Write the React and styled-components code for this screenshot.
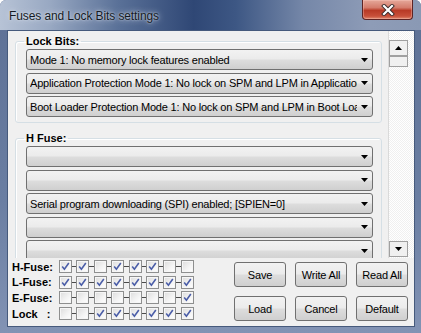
import React from "react"
import styled, { createGlobalStyle } from "styled-components"

const GlobalStyle = createGlobalStyle`
  html, body {
    margin: 0;
    padding: 0;
    background: #ffffff;
  }
  body {
    font-family: "Liberation Sans", Arial, sans-serif;
  }
`

const Window = styled.div`
  width: 421px;
  height: 333px;
  display: flex;
  flex-direction: column;
  border-radius: 6px 6px 0 0;
  overflow: hidden;
  background: linear-gradient(180deg, #5d7095 0%, #6a7ea2 60%, #8293b4 100%);
`

const TitleBar = styled.div`
  height: 30px;
  flex: none;
  display: flex;
  justify-content: space-between;
  align-items: flex-start;
  padding: 0 8px 0 9px;
  box-sizing: border-box;
  background: linear-gradient(90deg, #b7c3d6 0%, #98a8c2 12%, #5a7198 28%, #2f4775 46%, #3d5784 56%, #7587a8 72%, #8e9cb7 88%, #8a99b4 100%);
`

const Title = styled.span`
  padding-top: 9px;
  font-size: 12px;
  line-height: 15px;
  letter-spacing: -0.1px;
  color: #141a24;
  text-shadow: 0 0 6px rgba(230, 236, 245, 0.9), 0 0 2px rgba(230, 236, 245, 0.8);
`

const CloseButton = styled.div`
  width: 51px;
  height: 20px;
  box-sizing: border-box;
  border: 1px solid #5d2424;
  border-top: none;
  border-radius: 0 0 4px 4px;
  background: linear-gradient(180deg, #e5a89a 0%, #d47c6c 40%, #b83a26 55%, #c8503a 85%, #e08a70 100%);
  display: flex;
  align-items: center;
  justify-content: center;
  box-shadow: inset 0 0 0 1px rgba(255, 210, 200, 0.35);
`

const Frame = styled.div`
  flex: 1;
  display: flex;
  padding: 0 6px 6px 7px;
  min-height: 0;
  min-width: 0;
`

const Client = styled.div`
  flex: 1;
  display: flex;
  flex-direction: column;
  background: #f0f0f0;
  border: 1px solid #465a7c;
  min-height: 0;
  min-width: 0;
`

const ScrollArea = styled.div`
  height: 227px;
  flex: none;
  display: flex;
  min-width: 0;
`

const Content = styled.div`
  flex: 1;
  min-width: 0;
  padding: 4px 6px 0 7px;
  border-right: 1px solid #dadada;
  overflow: hidden;
`

const GroupBox = styled.fieldset`
  margin: 0 0 9px 0;
  padding: 2px 8px 5px 10px;
  min-width: 0;
  border: 1px solid #d5dfe5;
  border-radius: 3px;
  box-shadow: inset 1px 1px 0 #ffffff;
  display: flex;
  flex-direction: column;
  gap: 2.5px;
`

const Legend = styled.legend`
  padding: 0 2px;
  margin-left: -2px;
  font-size: 11px;
  font-weight: bold;
  color: #000000;
`

const Combo = styled.div`
  height: 21px;
  min-width: 0;
  box-sizing: border-box;
  border: 1px solid #707070;
  border-radius: 3px;
  background: linear-gradient(180deg, #f2f2f2 0%, #ebebeb 48%, #dddddd 52%, #cfcfcf 100%);
  display: flex;
  align-items: center;
  padding: 0 4px 0 3px;
  font-size: 11px;
  letter-spacing: -0.2px;
  color: #000000;
`

const ComboText = styled.span`
  flex: 1;
  min-width: 0;
  overflow: hidden;
  white-space: nowrap;
`

const Arrow = styled.svg`
  width: 7px;
  height: 4px;
  flex: none;
  margin-left: 4px;
`

const ScrollBar = styled.div`
  width: 25px;
  flex: none;
  display: flex;
  flex-direction: column;
  padding-top: 9px;
  background-color: #f0f0f0;
  background-image: repeating-conic-gradient(#ffffff 0 25%, #f0f0f0 0 50%);
  background-size: 2px 2px;
`

const ScrollButton = styled.div`
  width: 19px;
  height: ${p => p.$h}px;
  box-sizing: border-box;
  border: 1px solid #a0a0a0;
  background: #f0f0f0;
  display: flex;
  align-items: center;
  justify-content: center;
  margin-top: ${p => p.$push ? "auto" : "0"};
  margin-bottom: ${p => p.$push ? "1px" : "0"};
`

const Bottom = styled.div`
  flex: 1;
  display: flex;
  justify-content: space-between;
  padding: 3px 6px 5px 4px;
`

const Bits = styled.div`
  display: flex;
  flex-direction: column;
  gap: 2.7px;
  margin-top: -1px;
`

const BitRow = styled.div`
  display: flex;
  align-items: center;
  height: 13px;
`

const BitLabel = styled.span`
  width: 47px;
  font-size: 11px;
  font-weight: bold;
  color: #000000;
  white-space: pre;
`

const Box = styled.span`
  width: 13px;
  height: 13px;
  box-sizing: border-box;
  border: 1px solid #8e8f8f;
  background: linear-gradient(135deg, #dcdcdc 0%, #f4f4f4 60%, #ffffff 100%);
  box-shadow: inset 0 0 0 1px #f6f6f6;
  display: flex;
  align-items: center;
  justify-content: center;
`

const Dash = styled.span`
  width: 4.4px;
  height: 1px;
  background: #4a4a4a;
`

const Buttons = styled.div`
  display: grid;
  grid-template-columns: repeat(3, 52px);
  grid-auto-rows: 25px;
  column-gap: 9px;
  row-gap: 9px;
  padding-top: 1px;
`

const Button = styled.div`
  box-sizing: border-box;
  border: 1px solid #707070;
  border-radius: 3px;
  background: linear-gradient(180deg, #f2f2f2 0%, #ebebeb 48%, #dddddd 52%, #cfcfcf 100%);
  display: flex;
  align-items: center;
  justify-content: center;
  font-size: 11px;
  letter-spacing: -0.2px;
  color: #000000;
`

const lockCombos = [
  "Mode 1: No memory lock features enabled",
  "Application Protection Mode 1: No lock on SPM and LPM in Application Section",
  "Boot Loader Protection Mode 1: No lock on SPM and LPM in Boot Loader Section",
]

const hFuseCombos = [
  "",
  "",
  "Serial program downloading (SPI) enabled; [SPIEN=0]",
  "",
  "",
]

const bitRows = [
  { label: "H-Fuse:", bits: [1, 1, 0, 1, 1, 1, 0, 0] },
  { label: "L-Fuse:", bits: [1, 1, 1, 1, 1, 1, 1, 1] },
  { label: "E-Fuse:", bits: [0, 0, 0, 0, 0, 0, 0, 1] },
  { label: "Lock   :", bits: [0, 0, 1, 1, 1, 1, 1, 1] },
]

const DownArrow = () => (
  <Arrow viewBox="0 0 7 4"><path d="M0 0h7L3.5 4z" fill="#000" /></Arrow>
)

const ComboBox = ({ text }) => (
  <Combo>
    <ComboText>{text}</ComboText>
    <DownArrow />
  </Combo>
)

const CheckBox = ({ checked }) => (
  <Box>
    {checked ? (
      <svg width="9" height="9" viewBox="0 0 9 9">
        <path d="M1.2 4.6 L3.4 7.2 L7.8 1" fill="none" stroke="#4b5ea8" strokeWidth="1.6" />
      </svg>
    ) : null}
  </Box>
)

export default function App() {
  return (
    <>
      <GlobalStyle />
      <Window>
        <TitleBar>
          <Title>Fuses and Lock Bits settings</Title>
          <CloseButton>
            <svg width="14" height="12" viewBox="0 0 14 12">
              <path d="M3 2 L11 10 M11 2 L3 10" stroke="#3a2a2a" strokeWidth="4" strokeLinecap="square" />
              <path d="M3 2 L11 10 M11 2 L3 10" stroke="#ffffff" strokeWidth="2.2" strokeLinecap="square" />
            </svg>
          </CloseButton>
        </TitleBar>
        <Frame>
          <Client>
            <ScrollArea>
              <Content>
                <GroupBox>
                  <Legend>Lock Bits:</Legend>
                  {lockCombos.map((t, i) => <ComboBox key={i} text={t} />)}
                </GroupBox>
                <GroupBox>
                  <Legend>H Fuse:</Legend>
                  {hFuseCombos.map((t, i) => <ComboBox key={i} text={t} />)}
                </GroupBox>
              </Content>
              <ScrollBar>
                <ScrollButton $h={16}>
                  <svg width="7" height="4" viewBox="0 0 7 4"><path d="M0 4h7L3.5 0z" fill="#000" /></svg>
                </ScrollButton>
                <ScrollButton $h={11} />
                <ScrollButton $h={16} $push>
                  <svg width="7" height="4" viewBox="0 0 7 4"><path d="M0 0h7L3.5 4z" fill="#000" /></svg>
                </ScrollButton>
              </ScrollBar>
            </ScrollArea>
            <Bottom>
              <Bits>
                {bitRows.map(row => (
                  <BitRow key={row.label}>
                    <BitLabel>{row.label}</BitLabel>
                    {row.bits.map((b, i) => (
                      <React.Fragment key={i}>
                        {i > 0 && <Dash />}
                        <CheckBox checked={!!b} />
                      </React.Fragment>
                    ))}
                  </BitRow>
                ))}
              </Bits>
              <Buttons>
                <Button>Save</Button>
                <Button>Write All</Button>
                <Button>Read All</Button>
                <Button>Load</Button>
                <Button>Cancel</Button>
                <Button>Default</Button>
              </Buttons>
            </Bottom>
          </Client>
        </Frame>
      </Window>
    </>
  )
}
